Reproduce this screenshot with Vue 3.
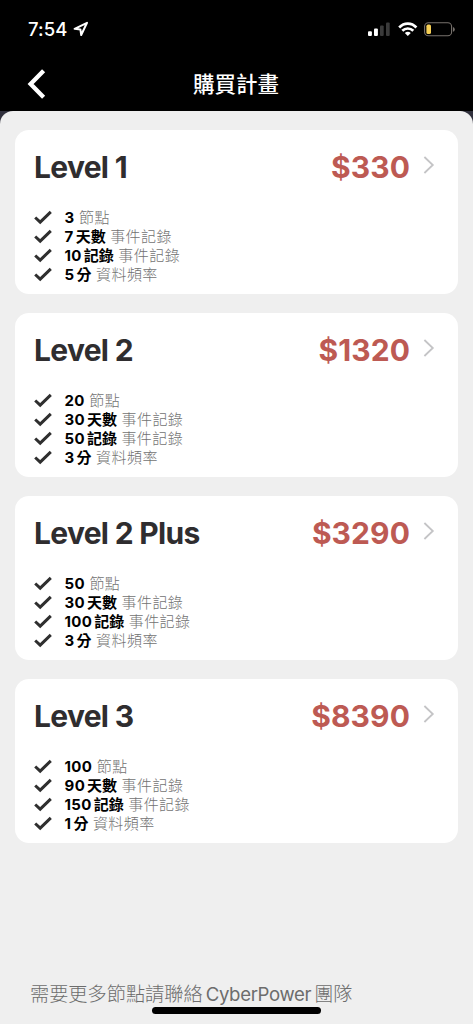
<script setup>
const records = '事件記錄'
const frequency = '資料頻率'

const makeFeatures = (nodes, days, logs, minutes) => [
  { number: nodes, unit: '', label: '節點' },
  { number: days, unit: '天數', label: records },
  { number: logs, unit: '記錄', label: records },
  { number: minutes, unit: '分', label: frequency },
]

const plans = [
  { name: 'Level 1', price: '$330', features: makeFeatures(3, 7, 10, 5) },
  { name: 'Level 2', price: '$1320', features: makeFeatures(20, 30, 50, 3) },
  { name: 'Level 2 Plus', price: '$3290', features: makeFeatures(50, 30, 100, 3) },
  { name: 'Level 3', price: '$8390', features: makeFeatures(100, 90, 150, 1) },
]
</script>

<template>
  <div class="screen">
    <div class="status">
      <div class="clock">
        <span class="time">7:54</span>
        <svg class="location" width="16" height="16" viewBox="0 0 16 16">
          <path d="M1.6 7.8 14 1.8 8.2 14 7.4 8.4Z" fill="none" stroke="#fff" stroke-width="2" stroke-linejoin="round" />
        </svg>
      </div>
      <div class="indicators">
        <svg width="22" height="15" viewBox="0 0 22 15">
          <rect x="0" y="9.2" width="3.9" height="4.8" rx="1" fill="#fff" />
          <rect x="6" y="6.4" width="3.9" height="7.6" rx="1" fill="#fff" />
          <rect x="12" y="3.4" width="3.7" height="10.6" rx="1" fill="#3a3a3a" />
          <rect x="18" y="0.4" width="3.7" height="13.6" rx="1" fill="#3a3a3a" />
        </svg>
        <svg class="wifi" width="20" height="15" viewBox="0 0 20 15">
          <g fill="none" stroke="#fff" stroke-width="2.7">
            <path d="M1.2 5.5C6.1.4 13.5.4 18.4 5.5" />
            <path d="M4.3 8.8C7.4 5.7 12.2 5.7 15.3 8.8" />
          </g>
          <path d="M6.8 10.9Q9.8 8.6 12.8 10.9L9.8 14Z" fill="#fff" />
        </svg>
        <svg class="battery" width="32" height="15" viewBox="0 0 32 15">
          <rect x="0.6" y="0.8" width="27" height="13" rx="3.8" fill="none" stroke="#77716c" stroke-width="1.1" />
          <rect x="2.4" y="2.6" width="4.6" height="9.4" rx="1.6" fill="#f6cf55" />
          <path d="M29 5.1Q30.8 5.7 30.8 7.4T29 9.7Z" fill="#77716c" />
        </svg>
      </div>
    </div>

    <header class="nav">
      <svg class="back" width="20" height="30" viewBox="0 0 20 30">
        <path d="M16.6 1.7 3.6 15 16.6 28.3" fill="none" stroke="#fff" stroke-width="4.3" />
      </svg>
      <h1 class="heading">購買計畫</h1>
    </header>

    <div class="backing">
      <main class="sheet">
        <section v-for="plan in plans" :key="plan.name" class="card">
          <div class="summary">
            <h2 class="name">{{ plan.name }}</h2>
            <span class="price">{{ plan.price }}</span>
            <svg class="chevron" width="12" height="18" viewBox="0 0 12 18">
              <path d="M1.4 1 9.8 9 1.4 17" fill="none" stroke="#c4c4c6" stroke-width="1.8" />
            </svg>
          </div>
          <ul class="features">
            <li v-for="(feature, i) in plan.features" :key="i" class="feature">
              <svg class="check" width="18" height="15" viewBox="0 0 18 15">
                <path d="M1.2 7.5 6.2 12.1 16.8 1.8" fill="none" stroke="#2f2f2f" stroke-width="3" />
              </svg>
              <span class="number">{{ feature.number }}</span>
              <span v-if="feature.unit" class="unit">{{ feature.unit }}</span>
              <span class="label">{{ feature.label }}</span>
            </li>
          </ul>
        </section>
        <footer class="contact">
          <span>需要更多節點請聯絡</span><span class="brand">CyberPower</span><span>團隊</span>
        </footer>
        <div class="home-bar"></div>
      </main>
    </div>
  </div>
</template>

<style>
body {
  margin: 0;
  background: #efefef;
}
</style>

<style scoped>
.screen {
  display: flex;
  flex-direction: column;
  width: 473px;
  height: 1024px;
  overflow: hidden;
  background: #000;
  font-family: Inter, "Noto Sans CJK TC", sans-serif;
}

.status {
  display: flex;
  justify-content: space-between;
  box-sizing: border-box;
  height: 58px;
  padding: 20px 17px 0 28px;
}

.clock,
.indicators {
  display: flex;
  align-items: center;
  height: 18px;
}

.time {
  color: #fff;
  font-size: 18.5px;
  font-weight: 500;
  line-height: 18px;
  letter-spacing: 0.1px;
}

.location {
  margin-left: 5px;
}

.wifi {
  margin-left: 8px;
}

.battery {
  margin-left: 6px;
}

.nav {
  display: grid;
  grid-template-columns: 1fr auto 1fr;
  align-items: center;
  box-sizing: border-box;
  height: 53px;
  padding: 0 28px 1px 27px;
}

.heading {
  margin: 0;
  color: #fff;
  font-size: 21.5px;
  font-weight: 500;
  line-height: 30px;
}

.backing {
  flex: 1;
  background: #30303c;
}

.sheet {
  display: flex;
  flex-direction: column;
  gap: 19px;
  box-sizing: border-box;
  height: 100%;
  padding: 19px 15px 0;
  border-radius: 13px 13px 0 0;
  background: #efefef;
}

.card {
  box-sizing: border-box;
  height: 164px;
  flex: none;
  padding: 18px 23px 0 19px;
  border-radius: 14px;
  background: #fff;
}

.summary {
  display: flex;
  align-items: center;
  height: 38px;
}

.name {
  flex: 1;
  margin: 0;
  color: #2f2d2f;
  font-size: 30px;
  font-weight: 700;
  line-height: 38px;
  letter-spacing: -0.7px;
}

.price {
  color: #bd5a53;
  font-size: 30px;
  font-weight: 700;
  line-height: 38px;
  letter-spacing: 0.1px;
}

.chevron {
  margin: 0 0 4px 13px;
}

.features {
  margin: 22px 0 0;
  padding: 0;
  list-style: none;
}

.feature {
  display: flex;
  align-items: center;
  height: 19px;
  font-size: 15px;
  line-height: 19px;
}

.check {
  margin-right: 12.6px;
}

.number {
  color: #000;
  font-weight: 700;
  letter-spacing: 0.3px;
}

.unit {
  margin-left: 2px;
  color: #000;
  font-weight: 700;
}

.label {
  margin-left: 4.5px;
  color: #727272;
  font-weight: 300;
  letter-spacing: 0.45px;
}

.contact {
  display: flex;
  margin-top: 120px;
  padding-left: 15px;
  color: #6c6c6c;
  font-size: 19.2px;
  font-weight: 300;
  line-height: 24px;
}

.brand {
  margin: 0 3px;
  font-size: 18.6px;
  font-weight: 400;
  letter-spacing: -0.35px;
}

.home-bar {
  position: absolute;
  left: 152px;
  top: 1007px;
  width: 169px;
  height: 7px;
  border-radius: 4px;
  background: #000;
}
</style>
